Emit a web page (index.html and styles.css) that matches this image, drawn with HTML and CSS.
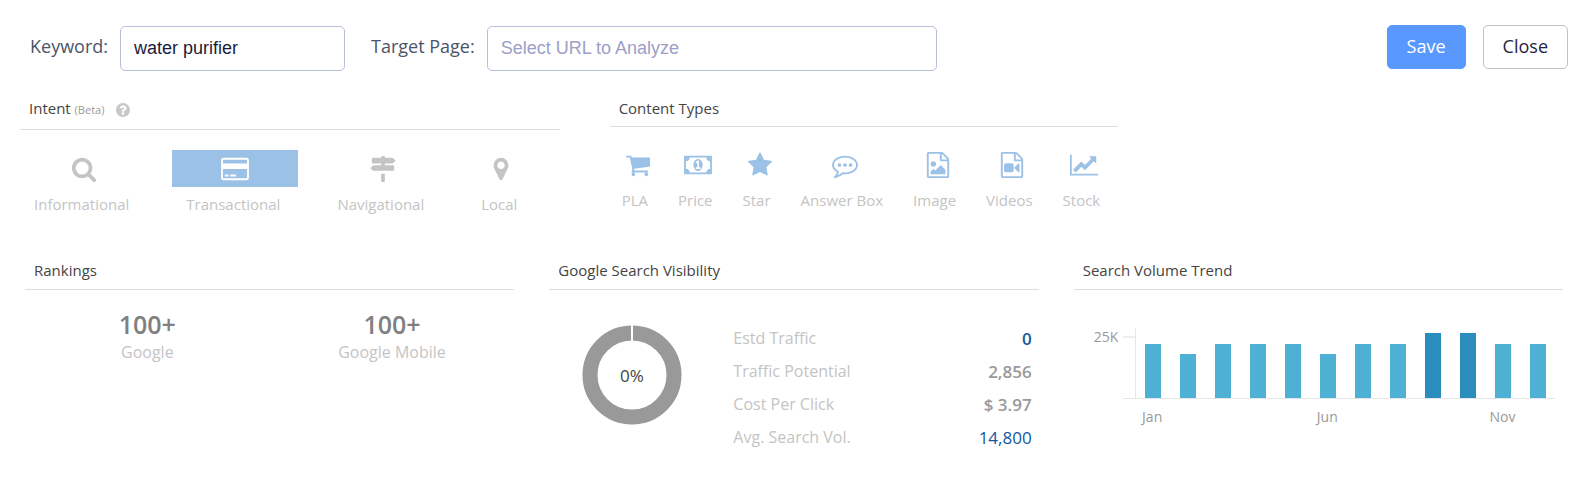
FILE: index.html
```html
<!DOCTYPE html>
<html lang="en">
<head>
    <meta charset="UTF-8">
    <meta name="viewport" content="width=device-width, initial-scale=1.0">
    <title>Keyword Details</title>
    <link rel="stylesheet" href="styles.css">
</head>
<body>

<!-- Keyword form -->
<form class="toolbar">
    <div class="field field-keyword">
        <label for="keyword">Keyword:</label>
        <input type="text" id="keyword" value="water purifier">
    </div>
    <div class="field field-target">
        <label for="target">Target Page:</label>
        <input type="text" id="target" placeholder="Select URL to Analyze">
    </div>
    <div class="actions">
        <button type="button" class="btn btn-primary">Save</button>
        <button type="button" class="btn">Close</button>
    </div>
</form>

<!-- Intent and content types -->
<div class="types-row">
    <section class="panel intent">
        <h2 class="panel-title">Intent <small>(Beta)</small>
            <svg class="help" viewBox="128 128 1536 1536"><path d="M1024 1376v-192q0-14-9-23t-23-9h-192q-14 0-23 9t-9 23v192q0 14 9 23t23 9h192q14 0 23-9t9-23zm256-672q0-88-55.500-163t-138.500-116-170-41q-243 0-371 213-15 24 8 42l132 100q7 6 19 6 16 0 25-12 53-68 86-92 34-24 86-24 48 0 85.500 26t37.500 59q0 38-20 61t-68 45q-63 28-115.500 86.500t-52.500 125.500v36q0 14 9 23t23 9h192q14 0 23-9t9-23q0-19 21.500-49.500t54.500-49.500q32-18 49-28.500t46-35 44.500-48 28-60.500 12.500-81zm384 192q0 209-103 385.500t-279.500 279.500-385.500 103-385.500-103-279.500-279.500-103-385.500 103-385.500 279.500-279.500 385.500-103 385.500 103 279.500 279.500 103 385.500z"/></svg>
        </h2>
        <div class="tiles">
            <button type="button" class="tile">
                <span class="tile-icon"><svg viewBox="0 0 1792 1792"><path d="M1216 832q0-185-131.5-316.5t-316.500-131.500-316.500 131.500-131.500 316.500 131.500 316.500 316.500 131.500 316.500-131.500 131.500-316.500zm512 832q0 52-38 90t-90 38q-54 0-90-38l-343-342q-179 124-399 124-143 0-273.500-55.500t-225-150-150-225-55.500-273.500 55.500-273.500 150-225 225-150 273.500-55.500 273.500 55.500 225 150 150 225 55.500 273.500q0 220-124 399l343 343q37 37 37 90z"/></svg></span>
                <span class="tile-label">Informational</span>
            </button>
            <button type="button" class="tile active">
                <span class="tile-icon"><svg class="wide" viewBox="0 0 1920 1792"><path fill-rule="evenodd" d="M160 128h1600q66 0 113 47t47 113v1216q0 66-47 113t-113 47h-1600q-66 0-113-47t-47-113v-1216q0-66 47-113t113-47zm0 128q-32 0-32 32v224h1664v-224q0-32-32-32zm-32 640v608q0 32 32 32h1600q32 0 32-32v-608zM256 1280h256v128h-256zM640 1280h384v128h-384z"/></svg></span>
                <span class="tile-label">Transactional</span>
            </button>
            <button type="button" class="tile">
                <span class="tile-icon"><svg viewBox="0 0 1792 1792"><path d="M1745 297q10 10 10 23t-10 23l-141 141q-28 28-68 28h-1344q-26 0-45-19t-19-45v-256q0-26 19-45t45-19h576v-64q0-26 19-45t45-19h128q26 0 45 19t19 45v64h512q40 0 68 28zm-977 919h256v512q0 26-19 45t-45 19h-128q-26 0-45-19t-19-45v-512zm832-576q26 0 45 19t19 45v256q0 26-19 45t-45 19h-1344q-40 0-68-28l-141-141q-10-10-10-23t10-23l141-141q28-28 68-28h512v-192h256v192h576z"/></svg></span>
                <span class="tile-label">Navigational</span>
            </button>
            <button type="button" class="tile">
                <span class="tile-icon"><svg viewBox="0 0 1792 1792"><path d="M1152 640q0-106-75-181t-181-75-181 75-75 181 75 181 181 75 181-75 75-181zm256 0q0 109-33 179l-364 774q-16 33-47.500 52t-67.500 19-67.500-19-46.500-52l-365-774q-33-70-33-179 0-212 150-362t362-150 362 150 150 362z"/></svg></span>
                <span class="tile-label">Local</span>
            </button>
        </div>
    </section>

    <section class="panel content-types">
        <h2 class="panel-title">Content Types</h2>
        <div class="tiles">
            <button type="button" class="tile">
                <span class="tile-icon"><svg viewBox="0 0 1792 1792"><path d="M704 1536q0 52-38 90t-90 38-90-38-38-90 38-90 90-38 90 38 38 90zm896 0q0 52-38 90t-90 38-90-38-38-90 38-90 90-38 90 38 38 90zm128-1088v512q0 24-16.500 42.500t-40.500 21.500l-1044 122q13 60 13 70 0 16-24 64h920q26 0 45 19t19 45-19 45-45 19h-1024q-26 0-45-19t-19-45q0-11 8-31.500t16-36 21.500-40 15.500-29.500l-177-823h-204q-26 0-45-19t-19-45 19-45 45-19h256q16 0 28.500 6.500t19.500 15.500 13 24.500 8 26 5.500 29.500 4.500 26h1201q26 0 45 19t19 45z"/></svg></span>
                <span class="tile-label">PLA</span>
            </button>
            <button type="button" class="tile">
                <span class="tile-icon"><svg class="wide" viewBox="0 0 1920 1792"><path fill-rule="evenodd" d="M0 256h1920v1280h-1920zM384 384q0 106-75 181t-181 75v512q106 0 181 75t75 181h1152q0-106 75-181t181-75v-512q-106 0-181-75t-75-181z"/><ellipse cx="960" cy="896" rx="320" ry="416"/><path class="cutout" d="M830 740l140-90v440M800 1110h340"/></svg></span>
                <span class="tile-label">Price</span>
            </button>
            <button type="button" class="tile">
                <span class="tile-icon"><svg viewBox="0 0 1792 1792"><path d="M1728 647q0 22-26 48l-363 354 86 500q1 7 1 20 0 21-10.500 35.500t-30.500 14.500q-19 0-40-12l-449-236-449 236q-22 12-40 12-21 0-31.500-14.500t-10.500-35.500q0-6 2-20l86-500-364-354q-25-27-25-48 0-37 56-46l502-73 225-455q19-41 49-41t49 41l225 455 502 73q56 9 56 46z"/></svg></span>
                <span class="tile-label">Star</span>
            </button>
            <button type="button" class="tile">
                <span class="tile-icon"><svg viewBox="0 0 1792 1792"><path d="M896 384q-204 0-381.500 69.500t-282 187.500-104.500 255q0 112 71.500 213.500t201.500 175.500l87 50-27 96q-24 91-70 172 152-63 275-171l43-38 57 6q69 8 130 8 204 0 381.500-69.500t282-187.500 104.500-255-104.500-255-282-187.500-381.500-69.500zm896 512q0 174-120 321.500t-326 233-450 85.500q-70 0-145-8-198 175-460 242-49 14-114 22h-5q-15 0-27-10.500t-16-27.500v-1q-3-4-.5-12t2-10 4.500-9.500l6-9 7-8.500 8-9q7-8 31-34.500t34.500-38 31-39.500 32.500-51 27-59 26-76q-157-89-247.500-220t-90.500-281q0-130 71-248.500t191-204.500 286-136.500 348-50.500 348 50.500 286 136.500 191 204.500 71 248.500z"/><circle cx="512" cy="896" r="128"/><circle cx="896" cy="896" r="128"/><circle cx="1280" cy="896" r="128"/></svg></span>
                <span class="tile-label">Answer Box</span>
            </button>
            <button type="button" class="tile">
                <span class="tile-icon"><svg viewBox="0 0 1792 1792"><path d="M1596 380q28 28 48 76t20 88v1152q0 40-28 68t-68 28h-1344q-40 0-68-28t-28-68v-1600q0-40 28-68t68-28h896q40 0 88 20t76 48zm-444-244v376h376q-10-29-22-41l-313-313q-12-12-41-22zm384 1528v-1024h-416q-40 0-68-28t-28-68v-416h-768v1536h1280zm-128-448v320h-1024v-192l192-192 128 128 384-384zm-832-192q-80 0-136-56t-56-136 56-136 136-56 136 56 56 136-56 136-136 56z"/></svg></span>
                <span class="tile-label">Image</span>
            </button>
            <button type="button" class="tile">
                <span class="tile-icon"><svg viewBox="0 0 1792 1792"><path d="M1596 380q28 28 48 76t20 88v1152q0 40-28 68t-68 28h-1344q-40 0-68-28t-28-68v-1600q0-40 28-68t68-28h896q40 0 88 20t76 48zm-444-244v376h376q-10-29-22-41l-313-313q-12-12-41-22zm384 1528v-1024h-416q-40 0-68-28t-28-68v-416h-768v1536h1280z"/><rect x="350" y="780" width="660" height="620" rx="120"/><path d="M1060 1060l270-270q80-20 80 40v520q0 60-80 40l-270-270z"/></svg></span>
                <span class="tile-label">Videos</span>
            </button>
            <button type="button" class="tile">
                <span class="tile-icon"><svg class="wide" viewBox="0 0 2048 1792"><path d="M2048 1536v128h-2048v-1536h128v1408zM1920 288v435q0 21-19.500 29.500t-35.500-7.500l-121-121-633 633q-10 10-23 10t-23-10l-233-233-416 416-192-192 585-585q10-10 23-10t23 10l233 233 464-464-121-121q-16-16-7.500-35.500t29.500-19.500h435q14 0 23 9t9 23z"/></svg></span>
                <span class="tile-label">Stock</span>
            </button>
        </div>
    </section>
</div>

<!-- Statistics -->
<div class="stats-row">
    <section class="panel">
        <h2 class="panel-title">Rankings</h2>
        <div class="rankings">
            <div class="rank">
                <strong>100+</strong>
                <span>Google</span>
            </div>
            <div class="rank">
                <strong>100+</strong>
                <span>Google Mobile</span>
            </div>
        </div>
    </section>

    <section class="panel">
        <h2 class="panel-title">Google Search Visibility</h2>
        <div class="visibility">
            <svg class="donut" viewBox="0 0 100 100">
                <circle cx="50" cy="50" r="42"/>
                <path d="M50 0v16"/>
                <text x="50" y="57">0%</text>
            </svg>
            <table class="metrics">
                <tr><th scope="row">Estd Traffic</th><td class="blue">0</td></tr>
                <tr><th scope="row">Traffic Potential</th><td>2,856</td></tr>
                <tr><th scope="row">Cost Per Click</th><td>$ 3.97</td></tr>
                <tr><th scope="row">Avg. Search Vol.</th><td class="blue light">14,800</td></tr>
            </table>
        </div>
    </section>

    <section class="panel">
        <h2 class="panel-title">Search Volume Trend</h2>
        <div class="chart">
            <span class="y-label">25K</span>
            <div class="y-tick"></div>
            <div class="plot">
                <div class="bar" style="height: 77%"></div>
                <div class="bar" style="height: 63%"></div>
                <div class="bar" style="height: 77%"></div>
                <div class="bar" style="height: 77%"></div>
                <div class="bar" style="height: 77%"></div>
                <div class="bar" style="height: 63%"></div>
                <div class="bar" style="height: 77%"></div>
                <div class="bar" style="height: 77%"></div>
                <div class="bar peak" style="height: 93%"></div>
                <div class="bar peak" style="height: 93%"></div>
                <div class="bar" style="height: 77%"></div>
                <div class="bar" style="height: 77%"></div>
            </div>
            <div class="x-labels">
                <span class="jan">Jan</span>
                <span class="jun">Jun</span>
                <span class="nov">Nov</span>
            </div>
        </div>
    </section>
</div>

</body>
</html>
```
FILE: styles.css
```css
* {
    margin: 0;
    padding: 0;
    box-sizing: border-box;
}

body {
    font-family: 'Open Sans', sans-serif;
    font-size: 15px;
    background-color: #fff;
    color: #444;
}

button {
    font-family: inherit;
    cursor: pointer;
}

/* Toolbar */
.toolbar {
    display: flex;
    align-items: flex-start;
    gap: 26px;
    padding: 25px 23px 0 30px;
}

.field {
    display: flex;
    gap: 12px;
    min-width: 0;
    padding-top: 1px;
}

.field-keyword {
    flex: 0 1 315px;
}

.field-target {
    flex: 0 1 566px;
}

.field label {
    font-size: 18px;
    line-height: 40px;
    color: #4b5468;
    white-space: nowrap;
}

.field input {
    flex: 1;
    min-width: 0;
    height: 45px;
    padding: 0 13px;
    border: 1px solid #b8c0dc;
    border-radius: 5px;
    font-family: 'Liberation Sans', Arial, sans-serif;
    font-size: 18px;
    color: #1b1b3a;
}

.field input::placeholder {
    color: #9aa0c8;
}

.actions {
    display: flex;
    gap: 17px;
    margin-left: auto;
}

.btn {
    height: 44px;
    padding: 0 19px 2px;
    border: 1px solid #c2c2c2;
    border-radius: 5px;
    background-color: #fff;
    color: #25253f;
    font-size: 18px;
}

.btn-primary {
    border-color: #5898ff;
    background-color: #5898ff;
    color: #fff;
}

/* Panels */
.panel-title {
    padding: 0 9px 7px;
    border-bottom: 1px solid #ddd;
    font-size: 15px;
    font-weight: normal;
    line-height: 24px;
}

.panel-title small {
    font-size: 11px;
    color: #999;
}

.help {
    width: 14px;
    height: 14px;
    margin-left: 8px;
    vertical-align: -3px;
    fill: #c8c8c8;
}

.types-row {
    display: grid;
    grid-template-columns: 27fr 25fr 20fr;
    gap: 50px;
    padding: 25px 23px 0 20px;
}

.content-types .panel-title {
    padding-bottom: 6px;
}

/* Icon tiles */
.tiles {
    display: flex;
    padding-top: 19px;
}

.intent .tiles {
    gap: 25px;
    padding-top: 20px;
}

.tile {
    padding: 0;
    border: none;
    background: none;
    color: #c4c4c4;
    font-size: 15px;
}

.tile-icon {
    display: flex;
    justify-content: center;
    align-items: center;
    height: 37px;
}

.tile-icon svg {
    width: 26px;
    height: 26px;
    fill: currentColor;
}

.tile-icon .wide {
    width: 28px;
}

.tile.active .tile-icon {
    background-color: #9cc1e7;
    color: #fff;
}

.content-types .tile-icon {
    color: #9cc1e7;
}

.tile-icon .cutout {
    fill: none;
    stroke: #fff;
    stroke-width: 110;
}

.tile-label {
    display: block;
    margin-top: 7px;
    padding: 0 18px 0 14px;
    line-height: 20px;
    white-space: nowrap;
}

.content-types .tile-label {
    padding: 0 18px 0 12px;
}

/* Statistics */
.stats-row {
    display: grid;
    grid-template-columns: repeat(3, 1fr);
    gap: 35px;
    padding: 44px 28px 0 25px;
}

.rankings {
    display: grid;
    grid-template-columns: 1fr 1fr;
    padding-top: 19px;
    text-align: center;
}

.rank strong {
    display: block;
    font-size: 25px;
    font-weight: 600;
    line-height: 30px;
    color: #808080;
}

.rank span {
    font-size: 16px;
    line-height: 26px;
    color: #c4c4c4;
}

.visibility {
    display: flex;
    align-items: flex-start;
    gap: 51px;
    padding: 32px 7px 0 33px;
}

.donut {
    flex: none;
    width: 100px;
    height: 100px;
    margin-top: 3px;
}

.donut circle {
    fill: none;
    stroke: #999;
    stroke-width: 15;
}

.donut path {
    stroke: #fff;
    stroke-width: 2;
}

.donut text {
    font-size: 17px;
    text-anchor: middle;
    fill: #444;
}

.metrics {
    flex: 1;
    border-collapse: collapse;
    font-size: 17px;
    line-height: 33px;
}

.metrics th {
    font-size: 16px;
    font-weight: normal;
    text-align: left;
    color: #c4c4c4;
}

.metrics td {
    font-weight: 600;
    text-align: right;
    color: #999;
}

.metrics .blue {
    color: #1557a0;
}

.metrics .light {
    font-weight: normal;
}

/* Trend chart */
.chart {
    display: grid;
    grid-template-columns: 29px 12px 1fr;
    grid-template-rows: 71px auto;
    padding: 38px 8px 0 20px;
    font-size: 14px;
    color: #999;
}

.y-label {
    line-height: 18px;
}

.y-tick {
    margin-top: 8px;
    border-top: 2px solid #eee;
    border-bottom: 1px solid #e6e6e6;
}

.plot {
    display: grid;
    grid-template-columns: repeat(12, 1fr);
    align-items: end;
    justify-items: center;
    border-left: 1px solid #e6e6e6;
    border-bottom: 1px solid #e6e6e6;
}

.bar {
    width: 16px;
    background-color: #4eb1d3;
}

.bar.peak {
    background-color: #2b8cbe;
}

.x-labels {
    grid-column: 3;
    display: grid;
    grid-template-columns: repeat(12, 1fr);
    justify-items: center;
    padding-top: 8px;
    line-height: 20px;
}

.jan {
    grid-column: 1;
}

.jun {
    grid-column: 6;
}

.nov {
    grid-column: 11;
}
```
